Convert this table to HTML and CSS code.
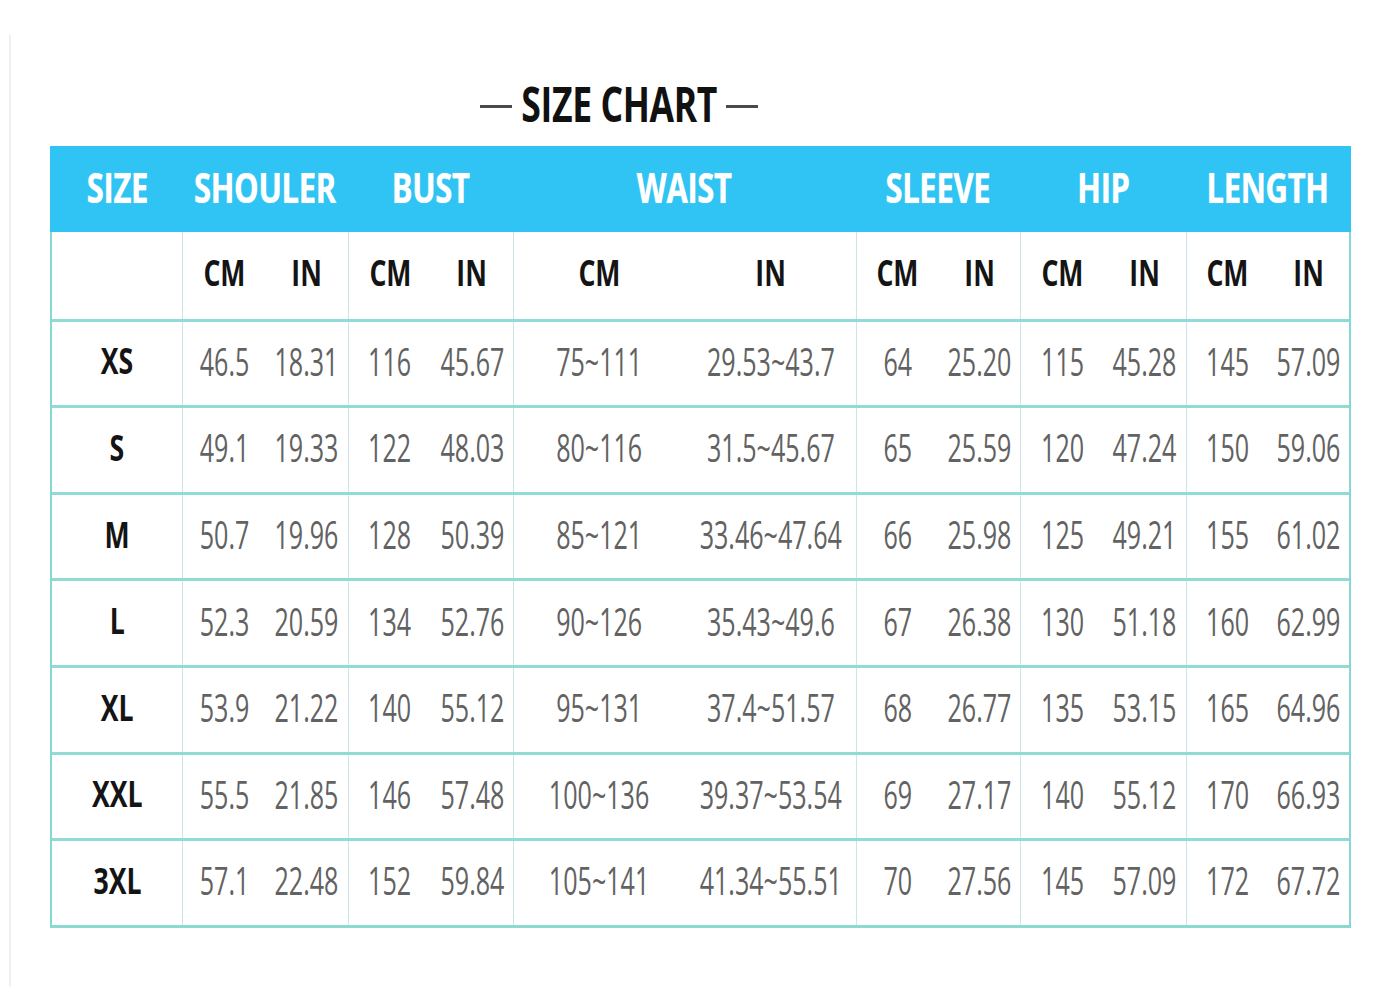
FILE: index.html
```html
<!DOCTYPE html>
<html lang="en">
<head>
<meta charset="utf-8">
<title>Size Chart</title>
<link rel="stylesheet" href="styles.css">
</head>
<body>
<div class="page">
  <div class="title-row">
    <span class="dash"></span>
    <h1 class="title"><span class="sq-title">SIZE CHART</span></h1>
    <span class="dash"></span>
  </div>

  <div class="chart">
    <div class="row head">
      <div class="cell"><span class="sq-h">SIZE</span></div>
      <div class="cell"><span class="sq-h">SHOULER</span></div>
      <div class="cell"><span class="sq-h">BUST</span></div>
      <div class="cell"><span class="sq-h">WAIST</span></div>
      <div class="cell"><span class="sq-h">SLEEVE</span></div>
      <div class="cell"><span class="sq-h">HIP</span></div>
      <div class="cell"><span class="sq-h">LENGTH</span></div>
    </div>

    <div class="row sub">
      <div class="cell"></div>
      <div class="cell"><div class="half"><span class="sq-b">CM</span></div><div class="half"><span class="sq-b">IN</span></div></div>
      <div class="cell"><div class="half"><span class="sq-b">CM</span></div><div class="half"><span class="sq-b">IN</span></div></div>
      <div class="cell"><div class="half"><span class="sq-b">CM</span></div><div class="half"><span class="sq-b">IN</span></div></div>
      <div class="cell"><div class="half"><span class="sq-b">CM</span></div><div class="half"><span class="sq-b">IN</span></div></div>
      <div class="cell"><div class="half"><span class="sq-b">CM</span></div><div class="half"><span class="sq-b">IN</span></div></div>
      <div class="cell"><div class="half"><span class="sq-b">CM</span></div><div class="half"><span class="sq-b">IN</span></div></div>
    </div>

    <div class="row data">
      <div class="cell"><span class="sq-b">XS</span></div>
      <div class="cell"><div class="half"><span class="sq-d">46.5</span></div><div class="half"><span class="sq-d">18.31</span></div></div>
      <div class="cell"><div class="half"><span class="sq-d">116</span></div><div class="half"><span class="sq-d">45.67</span></div></div>
      <div class="cell"><div class="half"><span class="sq-d">75~111</span></div><div class="half"><span class="sq-d">29.53~43.7</span></div></div>
      <div class="cell"><div class="half"><span class="sq-d">64</span></div><div class="half"><span class="sq-d">25.20</span></div></div>
      <div class="cell"><div class="half"><span class="sq-d">115</span></div><div class="half"><span class="sq-d">45.28</span></div></div>
      <div class="cell"><div class="half"><span class="sq-d">145</span></div><div class="half"><span class="sq-d">57.09</span></div></div>
    </div>

    <div class="row data">
      <div class="cell"><span class="sq-b">S</span></div>
      <div class="cell"><div class="half"><span class="sq-d">49.1</span></div><div class="half"><span class="sq-d">19.33</span></div></div>
      <div class="cell"><div class="half"><span class="sq-d">122</span></div><div class="half"><span class="sq-d">48.03</span></div></div>
      <div class="cell"><div class="half"><span class="sq-d">80~116</span></div><div class="half"><span class="sq-d">31.5~45.67</span></div></div>
      <div class="cell"><div class="half"><span class="sq-d">65</span></div><div class="half"><span class="sq-d">25.59</span></div></div>
      <div class="cell"><div class="half"><span class="sq-d">120</span></div><div class="half"><span class="sq-d">47.24</span></div></div>
      <div class="cell"><div class="half"><span class="sq-d">150</span></div><div class="half"><span class="sq-d">59.06</span></div></div>
    </div>

    <div class="row data">
      <div class="cell"><span class="sq-b">M</span></div>
      <div class="cell"><div class="half"><span class="sq-d">50.7</span></div><div class="half"><span class="sq-d">19.96</span></div></div>
      <div class="cell"><div class="half"><span class="sq-d">128</span></div><div class="half"><span class="sq-d">50.39</span></div></div>
      <div class="cell"><div class="half"><span class="sq-d">85~121</span></div><div class="half"><span class="sq-d">33.46~47.64</span></div></div>
      <div class="cell"><div class="half"><span class="sq-d">66</span></div><div class="half"><span class="sq-d">25.98</span></div></div>
      <div class="cell"><div class="half"><span class="sq-d">125</span></div><div class="half"><span class="sq-d">49.21</span></div></div>
      <div class="cell"><div class="half"><span class="sq-d">155</span></div><div class="half"><span class="sq-d">61.02</span></div></div>
    </div>

    <div class="row data">
      <div class="cell"><span class="sq-b">L</span></div>
      <div class="cell"><div class="half"><span class="sq-d">52.3</span></div><div class="half"><span class="sq-d">20.59</span></div></div>
      <div class="cell"><div class="half"><span class="sq-d">134</span></div><div class="half"><span class="sq-d">52.76</span></div></div>
      <div class="cell"><div class="half"><span class="sq-d">90~126</span></div><div class="half"><span class="sq-d">35.43~49.6</span></div></div>
      <div class="cell"><div class="half"><span class="sq-d">67</span></div><div class="half"><span class="sq-d">26.38</span></div></div>
      <div class="cell"><div class="half"><span class="sq-d">130</span></div><div class="half"><span class="sq-d">51.18</span></div></div>
      <div class="cell"><div class="half"><span class="sq-d">160</span></div><div class="half"><span class="sq-d">62.99</span></div></div>
    </div>

    <div class="row data">
      <div class="cell"><span class="sq-b">XL</span></div>
      <div class="cell"><div class="half"><span class="sq-d">53.9</span></div><div class="half"><span class="sq-d">21.22</span></div></div>
      <div class="cell"><div class="half"><span class="sq-d">140</span></div><div class="half"><span class="sq-d">55.12</span></div></div>
      <div class="cell"><div class="half"><span class="sq-d">95~131</span></div><div class="half"><span class="sq-d">37.4~51.57</span></div></div>
      <div class="cell"><div class="half"><span class="sq-d">68</span></div><div class="half"><span class="sq-d">26.77</span></div></div>
      <div class="cell"><div class="half"><span class="sq-d">135</span></div><div class="half"><span class="sq-d">53.15</span></div></div>
      <div class="cell"><div class="half"><span class="sq-d">165</span></div><div class="half"><span class="sq-d">64.96</span></div></div>
    </div>

    <div class="row data">
      <div class="cell"><span class="sq-b">XXL</span></div>
      <div class="cell"><div class="half"><span class="sq-d">55.5</span></div><div class="half"><span class="sq-d">21.85</span></div></div>
      <div class="cell"><div class="half"><span class="sq-d">146</span></div><div class="half"><span class="sq-d">57.48</span></div></div>
      <div class="cell"><div class="half"><span class="sq-d">100~136</span></div><div class="half"><span class="sq-d">39.37~53.54</span></div></div>
      <div class="cell"><div class="half"><span class="sq-d">69</span></div><div class="half"><span class="sq-d">27.17</span></div></div>
      <div class="cell"><div class="half"><span class="sq-d">140</span></div><div class="half"><span class="sq-d">55.12</span></div></div>
      <div class="cell"><div class="half"><span class="sq-d">170</span></div><div class="half"><span class="sq-d">66.93</span></div></div>
    </div>

    <div class="row data">
      <div class="cell"><span class="sq-b">3XL</span></div>
      <div class="cell"><div class="half"><span class="sq-d">57.1</span></div><div class="half"><span class="sq-d">22.48</span></div></div>
      <div class="cell"><div class="half"><span class="sq-d">152</span></div><div class="half"><span class="sq-d">59.84</span></div></div>
      <div class="cell"><div class="half"><span class="sq-d">105~141</span></div><div class="half"><span class="sq-d">41.34~55.51</span></div></div>
      <div class="cell"><div class="half"><span class="sq-d">70</span></div><div class="half"><span class="sq-d">27.56</span></div></div>
      <div class="cell"><div class="half"><span class="sq-d">145</span></div><div class="half"><span class="sq-d">57.09</span></div></div>
      <div class="cell"><div class="half"><span class="sq-d">172</span></div><div class="half"><span class="sq-d">67.72</span></div></div>
    </div>
  </div>
</div>
</body>
</html>
```

FILE: styles.css
```css
* { box-sizing: border-box; }

html, body {
  margin: 0;
  padding: 0;
  background: #ffffff;
}

body {
  font-family: "Open Sans", "Liberation Sans", Arial, sans-serif;
  width: 1382px;
  height: 1001px;
  overflow: hidden;
}

.page {
  margin: 35px 0 0 9px;
  height: 952px;
  border-left: 2px solid #eef0f5;
  padding: 45px 0 0 39px;
}

/* ---------- title ---------- */
.title-row {
  display: flex;
  align-items: center;
  justify-content: center;
  width: 1238px;          /* centres the title on x = 619 */
  margin-left: -50px;
  height: 48px;
  margin-bottom: 18px;
}

.dash {
  display: block;
  width: 32px;
  height: 3px;
  background: #4a4a4a;
  margin: 4px -17px 0;
}

.title {
  margin: 0 -8px;
  font-size: 48px;
  line-height: 48px;
  font-weight: 700;
  color: #111;
  white-space: nowrap;
}

.sq-title {
  display: inline-block;
  transform: scaleX(0.74);
  letter-spacing: -0.5px;
}

/* ---------- chart ---------- */
.chart {
  width: 1301px;
  display: flex;
  flex-direction: column;
  border-left: 2px solid #86d8d4;
  border-right: 2px solid #86d8d4;
  border-bottom: 3px solid #8bd9d3;
}

.row {
  display: grid;
  grid-template-columns: 130px 166px 165px 343px 164px 166px 163px;
}

.cell {
  display: flex;
  align-items: center;
  justify-content: center;
  white-space: nowrap;
  min-width: 0;
  padding-bottom: 5px;
}

.half {
  flex: 1 1 0;
  min-width: 0;
  display: flex;
  align-items: center;
  justify-content: center;
  height: 100%;
}

.head {
  height: 86px;
  background: #2fc4f3;
  margin: 0 -2px;
  padding: 0 2px;
}

.head .cell {
  color: #ffffff;
  font-size: 42px;
  font-weight: 700;
  text-shadow: 0 0 1px rgba(255, 255, 255, 0.7);
}

.sq-h {
  display: inline-block;
  transform: scaleX(0.74);
  letter-spacing: -0.5px;
}

.sub, .data {
  height: 86.6px;
}

.data {
  border-top: 3px solid #8fdbd5;
}

.sub .cell + .cell,
.data .cell + .cell {
  border-left: 1px solid #cfe4ea;
}

.sq-b {
  display: inline-block;
  font-size: 36px;
  font-weight: 700;
  color: #141414;
  transform: scaleX(0.74);
}

.sq-d {
  display: inline-block;
  font-size: 38px;
  font-weight: 400;
  color: #626262;
  transform: scaleX(0.66);
}
```
